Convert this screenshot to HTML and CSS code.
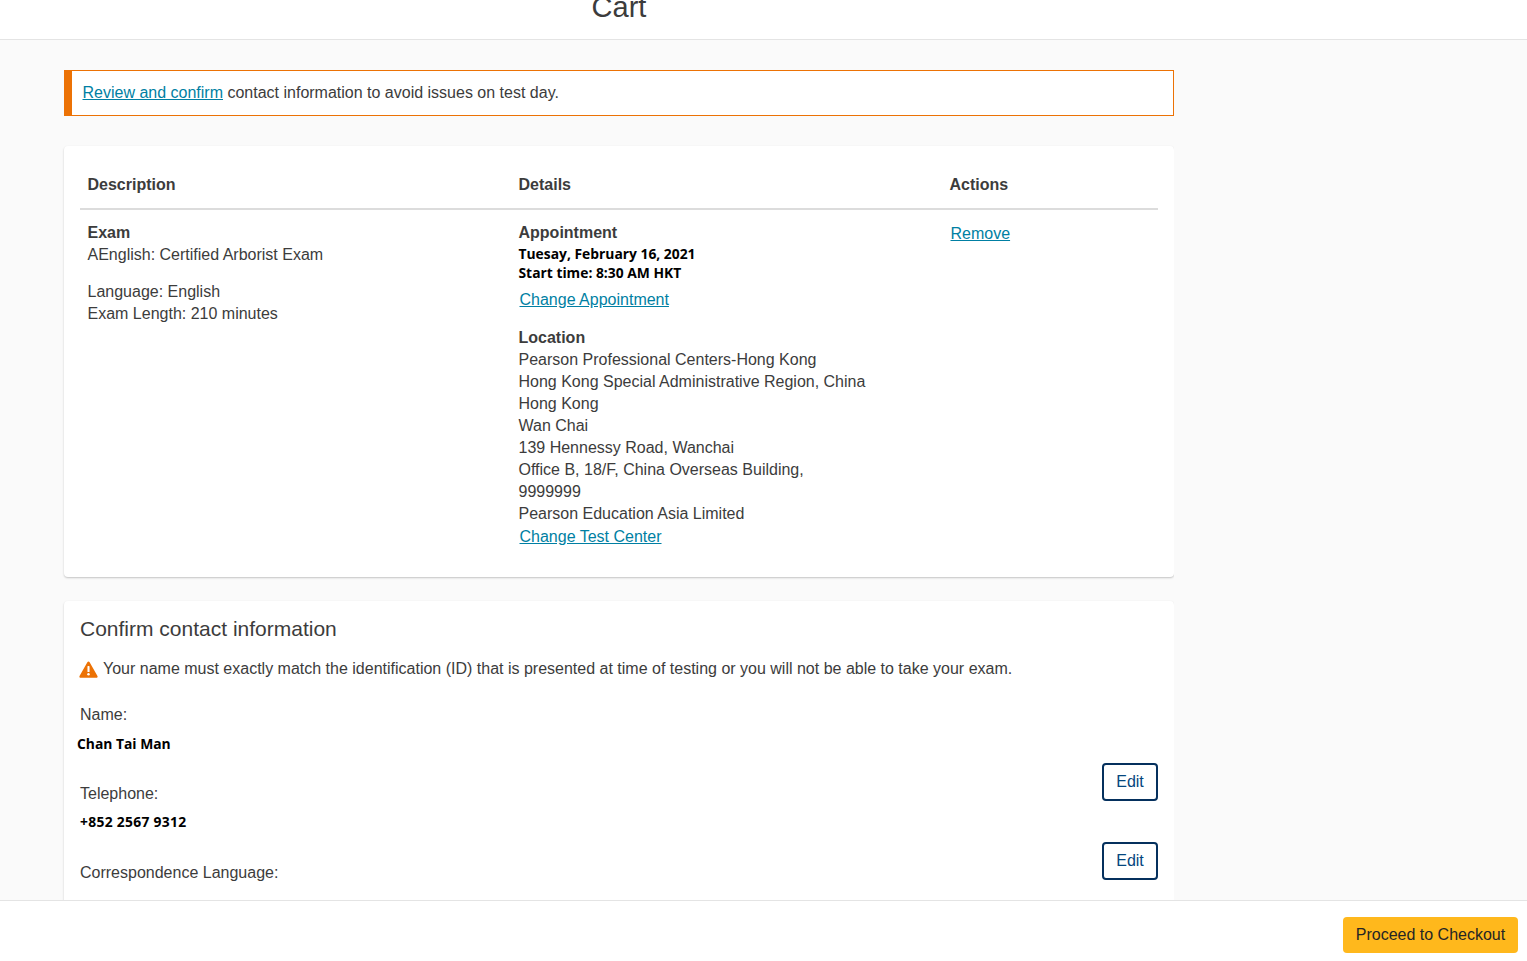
FILE: index.html
```html
<!DOCTYPE html>
<html lang="en">
  <head>
    <meta charset="UTF-8" />
    <meta name="viewport" content="width=device-width, initial-scale=1.0" />
    <title>Cart</title>
    <link rel="stylesheet" href="styles.css">
  </head>
  <body>
    <header class="top-bar">
      <h1 class="page-title">Cart</h1>
    </header>

    <main class="content">
      <div class="notice">
        <a href="#">Review and confirm</a> contact information to avoid issues on test day.
      </div>

      <section class="card cart-card">
        <div class="cart-grid cart-head">
          <div>Description</div>
          <div>Details</div>
          <div>Actions</div>
        </div>
        <div class="cart-grid cart-row">
          <div>
            <h3>Exam</h3>
            <p>AEnglish: Certified Arborist Exam</p>
            <p class="exam-meta">Language: English<br />Exam Length: 210 minutes</p>
          </div>
          <div>
            <h3>Appointment</h3>
            <p class="strong-text">Tuesay, February 16, 2021<br />Start time: 8:30 AM HKT</p>
            <a class="cell-link change-appt" href="#">Change Appointment</a>
            <h3 class="location-title">Location</h3>
            <p>
              Pearson Professional Centers-Hong Kong<br />
              Hong Kong Special Administrative Region, China<br />
              Hong Kong<br />
              Wan Chai<br />
              139 Hennessy Road, Wanchai<br />
              Office B, 18/F, China Overseas Building,<br />
              9999999<br />
              Pearson Education Asia Limited
            </p>
            <a class="cell-link change-center" href="#">Change Test Center</a>
          </div>
          <div>
            <a class="cell-link remove-link" href="#">Remove</a>
          </div>
        </div>
      </section>

      <section class="card contact-card">
        <h2>Confirm contact information</h2>
        <p class="warning">
          <svg class="warn-icon" viewBox="0 0 20 18" width="19" height="17">
            <path fill="#ec7205" d="M10 .6c.5 0 .9.3 1.2.7l8.3 14.5c.5.9-.1 1.9-1.2 1.9H1.7c-1.1 0-1.7-1-1.2-1.9L8.8 1.3c.3-.4.7-.7 1.2-.7z" />
            <rect fill="#fff" x="8.9" y="5.4" width="2.2" height="6.2" rx=".6" />
            <circle fill="#fff" cx="10" cy="14" r="1.3" />
          </svg>
          Your name must exactly match the identification (ID) that is presented at time of testing or you will not be able to take your exam.
        </p>

        <div class="field first-field">
          <div class="field-label">Name:</div>
          <div class="field-value name-value">Chan Tai Man</div>
        </div>
        <div class="field-action"><button class="edit-btn">Edit</button></div>

        <div class="field">
          <div class="field-label">Telephone:</div>
          <div class="field-value phone-value">+852 2567 9312</div>
        </div>
        <div class="field-action"><button class="edit-btn">Edit</button></div>

        <div class="field">
          <div class="field-label">Correspondence Language:</div>
        </div>
      </section>
    </main>

    <footer class="bottom-bar">
      <button class="checkout-btn">Proceed to Checkout</button>
    </footer>
  </body>
</html>
```

FILE: styles.css
```css
* {
  margin: 0;
  padding: 0;
  box-sizing: border-box;
}
html,
body {
  height: 100%;
  overflow: hidden;
}
body {
  display: flex;
  flex-direction: column;
  font-family: "Liberation Sans", Arial, sans-serif;
  font-size: 16px;
  line-height: 22px;
  color: #3c3c3c;
  background: #fafafa;
}
a {
  color: #007fa3;
}

.top-bar {
  flex: none;
  height: 40px;
  width: 100%;
  background: #fff;
  border-bottom: 1px solid #e4e4e4;
  overflow: hidden;
}
.page-title {
  width: 1110px;
  margin: -11px 0 0 64px;
  font-size: 29px;
  line-height: 36px;
  font-weight: 400;
  text-align: center;
}

.content {
  flex: 1;
  min-height: 0;
  overflow: hidden;
  width: 1174px;
  padding: 30px 0 0 64px;
}

.notice {
  height: 46px;
  padding: 11px 0 0 10.5px;
  background: #fff;
  border: 1px solid #ec7205;
  border-left-width: 8px;
}

.card {
  background: #fff;
  border-radius: 4px;
  box-shadow: 0 1px 2px rgba(0, 0, 0, 0.22);
}
.cart-card {
  margin-top: 30px;
  height: 431px;
  padding: 16px 16px 0;
}
.cart-grid {
  display: grid;
  grid-template-columns: 431px 431px 1fr;
}
.cart-grid > div {
  padding-left: 7.5px;
}
.cart-head {
  height: 48px;
  padding-top: 12px;
  font-weight: 700;
  border-bottom: 2px solid #dcdcdc;
}
.cart-row {
  padding-top: 12px;
}
h3 {
  font-size: 16px;
  font-weight: 700;
}
.exam-meta {
  margin-top: 15px;
}
.strong-text {
  font-family: "Open Sans", sans-serif;
  font-size: 13.85px;
  line-height: 19px;
  font-weight: 700;
  color: #000;
}
.cell-link {
  display: block;
  margin-left: 1px;
}
.change-appt {
  margin-top: 7px;
}
.location-title {
  margin-top: 16px;
}
.change-center {
  margin-top: 1px;
}
.remove-link {
  margin-top: 1px;
}

.contact-card {
  margin-top: 24px;
  height: 330px;
  padding: 13px 16px 0;
}
h2 {
  font-size: 21px;
  line-height: 30px;
  font-weight: 400;
}
.warning {
  display: flex;
  align-items: center;
  gap: 5px;
  margin: 14px 0 0 -1px;
  white-space: nowrap;
}
.warn-icon {
  flex: none;
}
.first-field {
  margin-top: 24px;
}
.field-value {
  margin-top: 8px;
  font-family: "Open Sans", sans-serif;
  font-size: 13.85px;
  line-height: 19px;
  font-weight: 700;
  color: #000;
}
.name-value {
  margin-left: -3px;
}
.phone-value {
  margin-top: 7px;
  padding-bottom: 1px;
  letter-spacing: 0.3px;
}
.field-action {
  display: flex;
  justify-content: flex-end;
  height: 38px;
  margin: 10px 0 -18px;
}
.edit-btn {
  width: 56px;
  height: 38px;
  background: #fff;
  border: 2px solid #05305d;
  border-radius: 4px;
  color: #05467e;
  font: 16px "Liberation Sans", Arial, sans-serif;
}

.bottom-bar {
  flex: none;
  display: flex;
  justify-content: flex-end;
  height: 61px;
  padding: 16px 9px 0 0;
  background: #fff;
  border-top: 1px solid #e4e4e4;
}
.checkout-btn {
  width: 175px;
  height: 36px;
  background: #ffb81c;
  border: none;
  border-radius: 4px;
  color: #252525;
  font: 16px "Liberation Sans", Arial, sans-serif;
}
```
